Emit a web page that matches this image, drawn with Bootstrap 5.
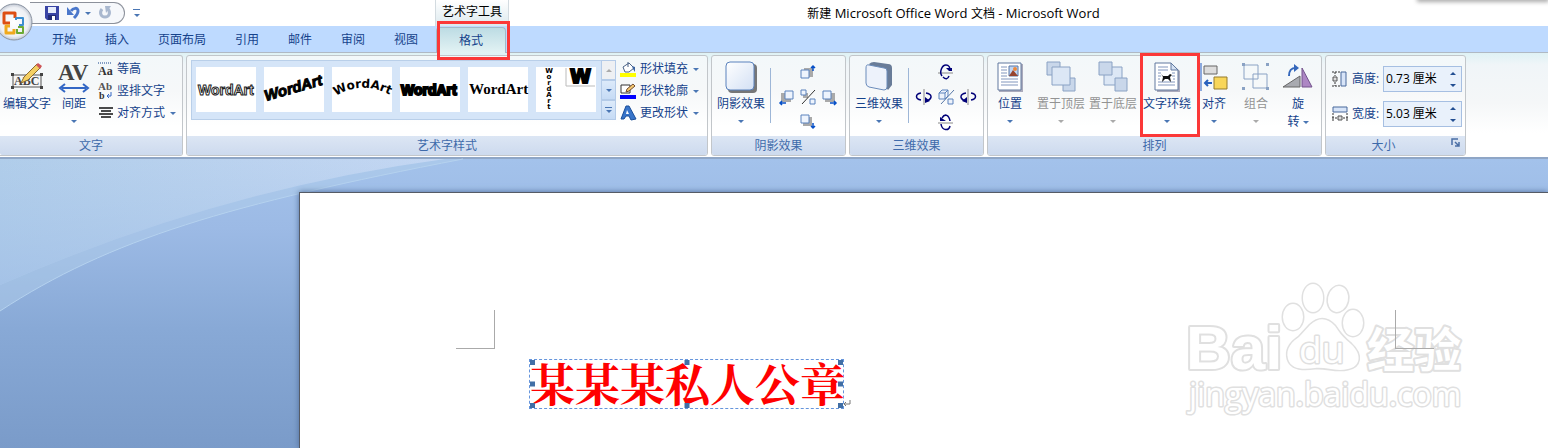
<!DOCTYPE html>
<html lang="zh-CN">
<head>
<meta charset="utf-8">
<meta name="viewport" content="width=device-width, initial-scale=1">
<title>新建 Microsoft Office Word 文档 - Microsoft Word</title>
<link rel="stylesheet" href="https://cdn.jsdelivr.net/npm/bootstrap@5.3.0/dist/css/bootstrap.min.css">
<style>
body{font:12px/18px "Open Sans","Noto Sans CJK SC",sans-serif;color:#15428b;background:#fff;overflow:hidden}
svg{display:block;flex:none;overflow:visible}
button{border:0;background:none;padding:0;color:inherit;font:inherit;white-space:nowrap}
.titlebar{height:26px;color:#000}
.quick{width:435px;padding-left:30px}
.pill{width:95px;height:22px;margin-top:2px;padding-left:15px;border:1px solid #8c919b;border-left:0;border-radius:0 11px 11px 0;background:#f6f8fb}
.orb{left:-6px;top:1px;z-index:5}
.context{width:74px;padding-top:3px;background:linear-gradient(#fff,#dce9ee);border:1px solid #d3dbe0;border-top:0;border-bottom:0}
.doctitle{padding-right:150px;font-size:13px;line-height:27px}
.doctitle span{font-size:12px}
.floatshade{right:0;top:-4px;width:130px;height:4px;box-shadow:0 1px 4px 1px #aaa}
.tabs{height:27px;background:#bedaff;border-bottom:1px solid #b0b9c4;padding-left:52px;gap:29px;line-height:28px}
.tabs a{color:#15428b;text-decoration:none}
.tabs .current{width:70px;margin:1px 0 -1px -11px;background:linear-gradient(#bddce4,#e3f3f4);border:1px solid #a3bac8;border-bottom:0;border-radius:4px 4px 0 0;line-height:25px;text-align:center}
.redbox{border:3px solid #fb3838;z-index:4;pointer-events:none}
.around-tab{inset:-7px -5px -7px 0}
.around-btn{inset:-6px -6px -6px 0}
.ribbon{height:106px;padding:2px 0;gap:3px;background:linear-gradient(#dff2f5,#f0f5f8 12px,#f5f7f8 50px,#fff 80px,#fff);border-bottom:2px solid #8fa6c6}
.group{border:1px solid #c2c6ca;border-radius:3px;height:101px;background:linear-gradient(#f3f8fa,#f6f8f9 35px,#fff 70px);flex:none}
.tools{height:80px}
.group footer{height:19px;line-height:19px;text-align:center;background:linear-gradient(#dce6f4,#cddaee);color:#3e6aaa;border-radius:0 0 2px 2px}
.g-text{width:183px;border-left:0;border-radius:0 3px 3px 0}.g-style{width:522px}.g-effect{width:135px}.g-arrange{width:335px}.g-size{width:141px}
.big{height:72px;margin-top:3px;position:relative;display:flex;flex-direction:column;align-items:center;flex:none}
.big .pic{height:36px;display:flex;align-items:center}
.big .drop{height:16px;display:flex;align-items:center}
.w40{width:40px}.w44{width:44px}.w50{width:50px}.w54{width:54px}
.off{color:#939393}
.tri{width:0;height:0;border:3px solid transparent;border-top-color:#4a76b4;border-bottom:0;display:inline-block}
.tri.up{border:3px solid transparent;border-bottom-color:#4a76b4;border-top:0}
.off .tri{border-top-color:#aaa}
.stack{padding-top:2px}
.small-row{height:22px;display:flex;align-items:center;gap:3px}
.small-row .tri{margin-left:2px}
.gallery{height:60px;margin:4px 0 0 4px;background:#d5e5f8;border:1px solid #b9cfe9;padding-left:4px;gap:8px}
.thumb{width:60px;height:45px;margin-bottom:2px;background:#fff;flex:none}
.scroller{width:15px;height:60px;margin:-1px -1px 0 -3px}
.scroller button{height:20px;border:1px solid #b4cbe8;background:linear-gradient(#dceafa,#c6dbf5);display:flex;flex-direction:column;align-items:center;justify-content:center;gap:2px}
.scroller button:first-child{background:#eef0f3}
.scroller .up{border-bottom-color:#aaa}
.bar{width:7px;height:1px;background:#4a76b4}
.rule{width:1px;height:55px;margin-top:12px;background:#9db6d7}
.nudge{grid-template:25px 25px 25px/22px 22px 22px;display:grid;place-items:center;margin:3px 0 0 4px}
.sizes{padding:10px 3px 0 6px}
.size-row{height:26px;margin-bottom:9px}
.spin{width:79px;height:26px;border:1px solid #a6bfe2;background:#e9f1fb;flex:none}
.spin input{width:62px;border:0;background:none;padding:0 0 0 2px;color:#000;font:inherit;outline:0}
.spin button{height:12px;display:flex;align-items:center;justify-content:center;width:14px}
.spin .tri{border-top-color:#234f92}.spin .tri.up{border-bottom-color:#234f92}
.launcher{right:5px;top:3px}
.workspace{background:linear-gradient(#a3c2eb,#9cbae5 70px,#88a9d6 170px,#7a9bc9 290px)}
.sheet{margin:33px 0 0 299px;border:1px solid #555b66;border-right:0;border-bottom:0;background:#fff;box-shadow:0 0 6px #4e6c98}
.margins{padding:117px 114px 0 156px}
.cropmark{width:39px;height:39px;border:1px solid #aaa;border-top:0;z-index:3}
.cropmark.l{border-left:0}.cropmark.r{border-right:0}
.seal{width:315px;height:50px;margin:10px 0 0 229px;border:1px dashed #6595dc;color:red;font:bold 45px/45px "Noto Serif CJK SC","Noto Sans CJK SC",serif;white-space:nowrap}
.handle{width:5px;height:5px;background:#416fa6;position:absolute}
.watermark{right:68px;top:82px}
.watermark text,.watermark path,.watermark ellipse{fill:#fff;stroke:#e0e0e0;stroke-width:4;stroke-linejoin:round;paint-order:stroke}
.watermark path,.watermark ellipse,.watermark .thin{stroke-width:3}
</style>
</head>
<body class="d-flex flex-column min-vh-100 position-relative">
<header class="titlebar d-flex flex-shrink-0">
  <div class="quick d-flex flex-shrink-0">
    <div class="pill d-flex align-items-center">
      <button aria-label="保存"><svg width="14" height="14"><path d="M0 0h14v14H2L0 12z" fill="#3a45a5"/><path d="M3 1h8v6H3z" fill="#e6ecfb"/><path d="M3 9h8v5H3z" fill="#222b75"/><path d="M7 10h3v4H7z" fill="#fff"/></svg></button>
      <button aria-label="撤消" class="ms-2"><svg width="14" height="14"><path d="M4 5C6 2 11 1 11 5c0 3-2 5-4 7" fill="none" stroke="#4a77cb" stroke-width="3"/><path d="M0 1v8h7z" fill="#4a77cb"/></svg></button>
      <span class="tri ms-1"></span>
      <button aria-label="恢复" class="ms-2"><svg width="14" height="14"><path d="M3 3c-3 4-1 8 3 8s6-4 3-8" fill="none" stroke="#a9b8cf" stroke-width="3"/><path d="M6 0h6L7 7z" fill="#a9b8cf"/></svg></button>
    </div>
    <button aria-label="自定义快速访问工具栏" class="d-flex flex-column align-items-center justify-content-center ms-2"><span class="bar mb-1"></span><span class="tri"></span></button>
  </div>
  <div class="context text-center">艺术字工具</div>
  <h1 class="doctitle flex-grow-1 text-center m-0 fw-normal"><span>新建</span> Microsoft Office Word <span>文档</span> - Microsoft Word</h1>
  <div class="floatshade position-absolute"></div>
</header>
<button class="orb position-absolute" aria-label="Office 按钮"><svg width="40" height="42" viewBox="-20 -21 40 42"><defs><radialGradient id="orb"><stop offset="0" stop-color="#fff"/><stop offset=".8" stop-color="#eef0f4"/><stop offset="1" stop-color="#c3c9d4"/></radialGradient></defs><circle r="18" fill="url(#orb)" stroke="#8c95a3"/><g fill="none" stroke-width="3" stroke-linejoin="round"><path d="M-4 1h-6V-9H1v5" stroke="#dd4e13"/><path d="M2-2v-2h7v7H5" stroke="#3d8fd0" stroke-width="2"/><path d="M-4 4h-4v7h8V7" stroke="#f0a91c"/><path d="M4 5h5v6H3V7" stroke="#6cab34" stroke-width="2"/></g></svg></button>
<nav class="tabs d-flex flex-shrink-0">
  <a href="#">开始</a><a href="#">插入</a><a href="#">页面布局</a><a href="#">引用</a><a href="#">邮件</a><a href="#">审阅</a><a href="#">视图</a>
  <a href="#" class="current position-relative">格式<span class="redbox around-tab position-absolute"></span></a>
</nav>
<main class="ribbon d-flex flex-shrink-0">
  <section class="group g-text">
    <div class="tools d-flex">
      <button class="big w54"><span class="pic"><svg width="32" height="28"><path d="M2 12h28v12H2z" fill="#f6f6f6" stroke="#555"/><text x="3" y="22" font-family="Liberation Serif" font-weight="bold" font-size="12" fill="#444">ABC</text><path d="M10 20l3-6L26 1l4 3-13 13z" fill="#f4cf62" stroke="#8a6a2d"/><path d="M25 2l2-2 4 3-2 3z" fill="#cf5659"/><path d="M0 10h3v3H0zM29 10h3v3h-3zM0 23h3v3H0zM29 23h3v3h-3z" fill="#444"/></svg></span>编辑文字</button>
      <button class="big w40"><span class="pic"><svg width="30" height="30"><text x="-1" y="18" font-family="Liberation Serif" font-weight="bold" font-size="23" fill="#444">AV</text><path d="M3 26h24M6 22l-5 4 5 4M24 22l5 4-5 4" fill="none" stroke="#3367c5" stroke-width="2"/></svg></span>间距<span class="drop"><i class="tri"></i></span></button>
      <div class="stack ms-1">
        <button class="small-row"><svg width="16" height="16"><path d="M0 2h14" stroke="#15428b" stroke-dasharray="1"/><text y="14" font-family="Liberation Serif" font-weight="bold" font-size="12" fill="#333">Aa</text></svg>等高</button>
        <button class="small-row"><svg width="16" height="16"><text y="7" font-family="Liberation Serif" font-weight="bold" font-size="11" fill="#555">Ab</text><text y="16" x="1" font-family="Liberation Serif" font-weight="bold" font-size="10" fill="#333">b</text><path d="M13 9v4H9m2-2l-2 2 2 2" fill="none" stroke="#3367c5"/></svg>竖排文字</button>
        <button class="small-row"><svg width="16" height="12"><path d="M1 1h14M3 4h10M1 7h14M3 10h10" stroke="#111" stroke-width="1.500"/></svg>对齐方式<i class="tri"></i></button>
      </div>
    </div>
    <footer>文字</footer>
  </section>
  <section class="group g-style">
    <div class="tools d-flex">
      <div class="gallery d-flex align-items-center">
        <button class="thumb"><svg width="60" height="45" font-family="Liberation Sans" font-weight="bold"><text x="2" y="28" font-size="14" fill="#fff" stroke="#222" stroke-width="1">WordArt</text></svg></button>
        <button class="thumb"><svg width="60" height="45" font-family="Liberation Sans" font-weight="bold"><text x="2" y="34" transform="rotate(-16 2 34)" font-style="italic" font-size="15" stroke="#000">WordArt</text></svg></button>
        <button class="thumb"><svg width="60" height="45"><path id="arch" d="M4 29Q30 12 62 30" fill="none"/><text font-family="DejaVu Sans" font-weight="bold" font-size="12"><textPath href="#arch">WordArt</textPath></text></svg></button>
        <button class="thumb"><svg width="60" height="45"><text x="1" y="28" font-family="Liberation Sans" font-weight="bold" font-size="14" stroke="#000" stroke-width="2">WordArt</text></svg></button>
        <button class="thumb"><svg width="60" height="45"><text x="1" y="27" font-family="Liberation Serif" font-weight="bold" font-size="15">WordArt</text></svg></button>
        <button class="thumb"><svg width="60" height="45"><g font-family="DejaVu Sans" font-weight="bold" font-size="7" text-anchor="middle"><text x="13" y="6">W</text><text x="13" y="12">o</text><text x="13" y="18">r</text><text x="13" y="24">d</text><text x="13" y="30">A</text><text x="13" y="36">r</text><text x="13" y="42">t</text></g><path d="M30 1v18h29" fill="none" stroke="#bbb"/><text x="34" y="16" font-family="DejaVu Sans" font-weight="bold" font-size="19" stroke="#000" stroke-width="2">W</text></svg></button>
        <div class="scroller d-flex flex-column align-self-start"><button aria-label="上一行"><i class="tri up"></i></button><button aria-label="下一行"><i class="tri"></i></button><button aria-label="其他"><i class="bar"></i><i class="tri"></i></button></div>
      </div>
      <div class="stack ms-1">
        <button class="small-row"><svg width="17" height="16"><path d="M0 12h16v4H0z" fill="#ff0"/><path d="M3 6l6-4 5 5-5 4H5z" fill="#fff" stroke="#4b6386"/><path d="M8 6V1" stroke="#4b6386"/><path d="M12 5l3 1v5l-2-3z" fill="#3b64a1"/></svg>形状填充<i class="tri"></i></button>
        <button class="small-row"><svg width="17" height="16"><path d="M0 12h16v4H0z" fill="#00f"/><path d="M1 2h9v8H1z" fill="#fff" stroke="#333"/><path d="M6 9l1-3 6-5 2 2-6 5z" fill="#f4c871" stroke="#704b30"/></svg>形状轮廓<i class="tri"></i></button>
        <button class="small-row"><svg width="17" height="16"><path d="M6 1h3l7 13-5 1-2-4H6l-2 3H1z" fill="#3774ca" stroke="#1b4f99"/><path d="M7 5l2 4H6z" fill="#fff"/></svg>更改形状<i class="tri"></i></button>
      </div>
    </div>
    <footer>艺术字样式</footer>
  </section>
  <section class="group g-effect">
    <div class="tools d-flex">
      <button class="big ms-1 w50"><span class="pic"><svg width="32" height="32"><defs><linearGradient id="pale" x2="1" y2="1"><stop stop-color="#fff"/><stop offset="1" stop-color="#d3e0f4"/></linearGradient></defs><rect x="3" y="3" width="29" height="29" rx="4" fill="#777"/><rect x="1" y="1" width="28" height="28" rx="4" fill="url(#pale)" stroke="#5a82bd"/></svg></span>阴影效果<span class="drop"><i class="tri"></i></span></button>
      <i class="rule ms-1"></i>
      <div class="nudge">
        <i></i><button aria-label="上移阴影"><svg width="16" height="16"><path d="M4 4h9v9H4z" fill="#aaa"/><path d="M1 6h8v8H1z" fill="#eef4fd" stroke="#5a82bd"/><path d="M13 7V2M11 4l2-2 2 2" fill="none" stroke="#0750c7" stroke-width="1.500"/></svg></button><i></i>
        <button aria-label="左移阴影"><svg width="16" height="16"><path d="M3 4h10v9H3z" fill="#aaa"/><path d="M7 2h8v8H7z" fill="#eef4fd" stroke="#5a82bd"/><path d="M8 14H2m2-2l-2 2 2 2" fill="none" stroke="#0750c7" stroke-width="1.500"/></svg></button>
        <button aria-label="阴影开关"><svg width="16" height="16"><path d="M3 4h5v5H3z" fill="#aaa"/><path d="M1 1h5v5H1zM10 10h5v5h-5z" fill="#eef4fd" stroke="#5a82bd"/><path d="M15 1L2 15" stroke="#333"/></svg></button>
        <button aria-label="右移阴影"><svg width="16" height="16"><path d="M3 4h10v9H3z" fill="#aaa"/><path d="M1 2h8v8H1z" fill="#eef4fd" stroke="#5a82bd"/><path d="M8 14h6m-2-2l2 2-2 2" fill="none" stroke="#0750c7" stroke-width="1.500"/></svg></button>
        <i></i><button aria-label="下移阴影"><svg width="16" height="16"><path d="M3 3h9v9H3z" fill="#aaa"/><path d="M1 1h8v8H1z" fill="#eef4fd" stroke="#5a82bd"/><path d="M13 9v5m-2-2l2 2 2-2" fill="none" stroke="#0750c7" stroke-width="1.500"/></svg></button><i></i>
      </div>
    </div>
    <footer>阴影效果</footer>
  </section>
  <section class="group g-effect">
    <div class="tools d-flex">
      <button class="big ms-1 w50"><span class="pic"><svg width="28" height="30"><path d="M4 2Q6 0 9 0l14 2q4 0 4 4v17l-4 5z" fill="#697c98"/><path d="M4 3Q1 2 1 6v15q0 3 3 4l15 3q3 0 3-3V9q0-3-3-3z" fill="#edf2fb" stroke="#6b8cbb"/></svg></span>三维效果<span class="drop"><i class="tri"></i></span></button>
      <i class="rule ms-1"></i>
      <div class="nudge">
        <i></i><button aria-label="上翘"><svg width="16" height="16"><path d="M0 9h15" stroke="#888"/><path d="M4 12C1 8 4 1 8 1c3 0 4 3 4 5M5 13q4 4 6-1" fill="none" stroke="#000078" stroke-width="1.500"/><path d="M8 4h6v3l-3 0z" fill="#000078"/></svg></button><i></i>
        <button aria-label="左偏"><svg width="16" height="16"><path d="M8 0v16" stroke="#888"/><path d="M5 4C-1 5-1 10 5 11M10 4c6 1 7 5 1 8" fill="none" stroke="#000078" stroke-width="1.500"/><path d="M9 8v6l5-2z" fill="#000078"/></svg></button>
        <button aria-label="三维开关"><svg width="16" height="16"><path d="M1 4h6v6H1zM1 4l3-3h6L7 4M10 1v6l-3 3M10 10h5v5h-5z" fill="#edf2fb" stroke="#5a82bd"/><path d="M16 1L3 15" stroke="#5878a8"/></svg></button>
        <button aria-label="右偏"><svg width="16" height="16"><path d="M8 0v16" stroke="#888"/><path d="M11 4c6 1 6 6 0 7M6 4C0 5-1 9 5 12" fill="none" stroke="#000078" stroke-width="1.500"/><path d="M7 8v6l-5-2z" fill="#000078"/></svg></button>
        <i></i><button aria-label="下俯"><svg width="16" height="16"><path d="M0 9h15" stroke="#888"/><path d="M4 4c3-5 7-3 8 3M3 10c1 7 8 7 9 2" fill="none" stroke="#000078" stroke-width="1.500"/><path d="M2 3v4h6z" fill="#000078"/></svg></button><i></i>
      </div>
    </div>
    <footer>三维效果</footer>
  </section>
  <section class="group g-arrange">
    <div class="tools d-flex">
      <button class="big w44 ms-0"><span class="pic"><svg width="26" height="30"><path d="M2 2h24v28H2z" fill="#aab"/><path d="M1 1h23v27H1z" fill="#fff" stroke="#60799f"/><path d="M4 5h6M4 8h6M4 11h6M4 14h6M4 17h17M4 20h17M4 23h17" stroke="#8196bd"/><path d="M12 4h9v10h-9z" fill="#bfd5f4" stroke="#5877a5"/><path d="M12 14l4-6 5 6z" fill="#96442f"/><circle cx="18" cy="7" r="2" fill="#ec893b"/></svg></span>位置<span class="drop"><i class="tri"></i></span></button>
      <button class="big w50 off ms-1" disabled><span class="pic"><svg width="30" height="32"><g fill="#c9d7ea" stroke="#8aa2c4"><path d="M1 1h13v13H1zM17 17h12v13H17z"/><path d="M6 6h18v18H6z" fill="#dce7f5"/></g></svg></span>置于顶层<span class="drop"><i class="tri"></i></span></button>
      <button class="big w54 off" disabled><span class="pic"><svg width="30" height="32"><g fill="#c9d7ea" stroke="#8aa2c4"><path d="M6 6h18v18H6z" fill="#dce7f5"/><path d="M1 1h13v13H1zM17 17h12v13H17z"/></g></svg></span>置于底层<span class="drop"><i class="tri"></i></span></button>
      <button class="big w54"><span class="pic"><svg width="26" height="30"><path d="M3 3l15-1 8 7v21H3z" fill="#aab"/><path d="M1 1h16l7 7v20H1z" fill="#fff" stroke="#60799f"/><path d="M17 1v7h7z" fill="#d5e2f3" stroke="#60799f"/><path d="M4 5h10M4 8h10M4 11h3M18 11h3M4 14h3M18 14h3M4 17h2M19 17h2M4 20h17M4 23h17" stroke="#8196bd"/><path d="M7 12l2 2h5l2-2 2 1-2 2 1 5-3-3h-3l-3 3 1-5z" fill="#111"/></svg></span>文字环绕<span class="drop"><i class="tri"></i></span><span class="redbox around-btn position-absolute"></span></button>
      <button class="big w40"><span class="pic"><svg width="28" height="28"><path d="M1 0v28" stroke="#225bc2"/><path d="M4 3h13v8H4z" fill="#ddd" stroke="#666"/><path d="M14 14h13v12H14z" fill="#f8d65a" stroke="#957b2d"/><path d="M12 20H5m3-3l-3 3 3 3" fill="none" stroke="#2760bd" stroke-width="2"/></svg></span>对齐<span class="drop"><i class="tri"></i></span></button>
      <button class="big w44 off" disabled><span class="pic"><svg width="28" height="28"><path d="M2 2h14v14H2zM11 11h14v14H11z" fill="none" stroke="#8aa2c4"/><path d="M0 0h3v3H0zM24 0h3v3h-3zM0 24h3v3H0zM24 24h3v3h-3z" fill="#8aa2c4"/></svg></span>组合<span class="drop"><i class="tri"></i></span></button>
      <button class="big w40"><span class="pic"><svg width="30" height="26"><path d="M0 23L17 12v11z" fill="#a8aab0" stroke="#666"/><path d="M19 4l10 19H19z" fill="#ad87c4" stroke="#72538c"/><path d="M6 12C6 6 8 4 13 4" fill="none" stroke="#3467bb" stroke-width="2"/><path d="M11 0l5 4-5 4z" fill="#3467bb"/></svg></span>旋<span>转 <i class="tri align-middle"></i></span></button>
    </div>
    <footer>排列</footer>
  </section>
  <section class="group g-size">
    <div class="sizes tools">
      <div class="size-row d-flex align-items-center justify-content-between"><svg width="16" height="16"><path d="M9 1h5v14H9z" fill="#d7e4f8" stroke="#49689b"/><path d="M0 1h8M0 15h8M3 1v4M3 11v4" fill="none" stroke="#333" stroke-dasharray="2 1"/><path d="M1 6h4v4H1z" fill="#ddd" stroke="#555"/></svg><label for="h">高度:</label><div class="spin d-flex align-items-center"><input id="h" value="0.73 厘米"><div><button aria-label="增加高度"><i class="tri up"></i></button><button aria-label="减少高度"><i class="tri"></i></button></div></div></div>
      <div class="size-row d-flex align-items-center justify-content-between"><svg width="16" height="16"><path d="M1 1h14v5H1z" fill="#d7e4f8" stroke="#49689b"/><path d="M1 7v8M15 7v8M0 12h5M11 12h5" stroke="#333" stroke-dasharray="2 1"/><path d="M6 10h4v4H6z" fill="#ddd" stroke="#555"/></svg><label for="w">宽度:</label><div class="spin d-flex align-items-center"><input id="w" value="5.03 厘米"><div><button aria-label="增加宽度"><i class="tri up"></i></button><button aria-label="减少宽度"><i class="tri"></i></button></div></div></div>
    </div>
    <footer class="position-relative pe-4">大小<button class="launcher position-absolute" aria-label="大小选项"><svg width="8" height="8"><path d="M0 6V0h6M3 3l4 4M7 3v4H3" fill="none" stroke="#4a6ea5" stroke-width="1.500"/></svg></button></footer>
  </section>
</main>
<div class="workspace d-flex flex-column flex-grow-1 position-relative">
  <svg class="position-absolute top-0 start-0" width="470" height="160" aria-hidden="true"><defs><linearGradient id="sky" x2="1"><stop stop-color="#b0cdea"/><stop offset="1" stop-color="#c4d7f3"/></linearGradient><linearGradient id="fade" x2="0" y2="1"><stop stop-color="#a6c4e8" stop-opacity="0"/><stop offset="1" stop-color="#a0bee6"/></linearGradient></defs><path d="M0 0v152C110 80 230 45 463 0z" fill="#b4d0ea" opacity=".45"/><path d="M0 152C110 80 230 45 463 0" fill="none" stroke="#b5d2ef"/><path d="M0 0v126Q220 30 445 0z" fill="url(#sky)"/><path d="M0 0v126Q220 30 445 0z" fill="url(#fade)" opacity=".7"/></svg>
  <article class="sheet flex-grow-1 position-relative">
    <div class="margins d-flex justify-content-between"><i class="cropmark l position-relative"></i><i class="cropmark r position-relative"></i></div>
    <div class="seal position-relative">某某某私人公章
      <i class="handle start-0 top-0"></i><i class="handle start-50 top-0 translate-middle-x"></i><i class="handle end-0 top-0"></i><i class="handle start-0 top-50 translate-middle-y"></i><i class="handle end-0 top-50 translate-middle-y"></i><i class="handle start-0 bottom-0"></i><i class="handle start-50 bottom-0 translate-middle-x"></i><i class="handle end-0 bottom-0"></i>
      <svg class="position-absolute start-100 bottom-0" width="8" height="8"><path d="M7 0v4H1m2-2L1 4l2 2" fill="none" stroke="#777"/></svg>
    </div>
    <svg class="watermark position-absolute" width="300" height="145" viewBox="1180 275 300 145"><text x="1186" y="369" font-family="Liberation Sans" font-weight="bold" font-size="62">Bai</text><ellipse cx="1293" cy="317" rx="10" ry="13"/><ellipse cx="1313" cy="298" rx="10" ry="14"/><ellipse cx="1338" cy="299" rx="10" ry="13" transform="rotate(12 1338 299)"/><ellipse cx="1353" cy="323" rx="10" ry="13"/><path d="M1310 325q13-12 25 1c5 8 10 13 16 18 12 11 9 23-3 25-12 3-21-2-33-1-13 2-24 1-27-9-3-11 5-18 11-22z"/><text x="1299" y="363" font-family="Open Sans" font-size="37" class="thin">du</text><text x="1367" y="367" font-family="Noto Sans CJK SC" font-weight="bold" font-size="47">经验</text><text x="1189" y="406" font-family="Open Sans" font-size="32" class="thin">jingyan.baidu.com</text></svg>
  </article>
</div>
<script src="https://cdn.jsdelivr.net/npm/bootstrap@5.3.0/dist/js/bootstrap.bundle.min.js"></script>
</body>
</html>
